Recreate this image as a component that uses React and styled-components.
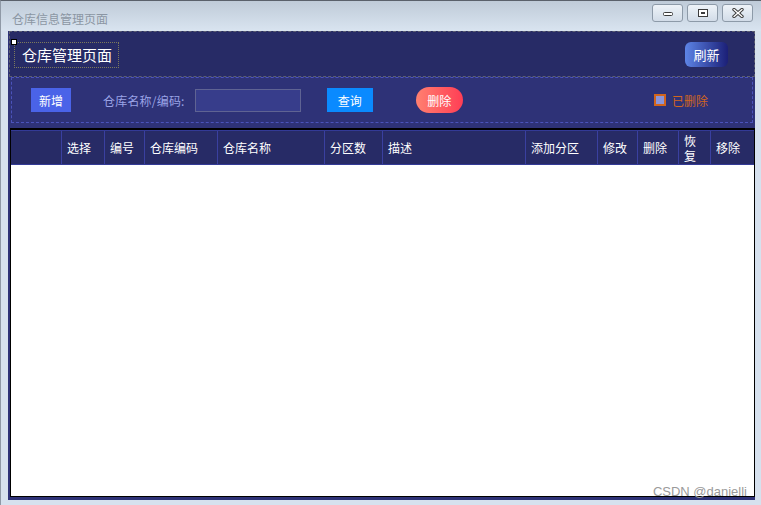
import React, { useState } from 'react'
import styled, { createGlobalStyle } from 'styled-components'

const GlobalStyle = createGlobalStyle`
  html, body {
    margin: 0;
    padding: 0;
    background: #d6e1ee;
    font-family: "Noto Sans CJK SC", "Noto Sans", sans-serif;
  }
  * {
    box-sizing: border-box;
  }
`

const columns = [
  { title: '', width: '50px' },
  { title: '选择', width: '43px' },
  { title: '编号', width: '40px' },
  { title: '仓库编码', width: '73px' },
  { title: '仓库名称', width: '107px' },
  { title: '分区数', width: '58px' },
  { title: '描述', width: '143px' },
  { title: '添加分区', width: '72px' },
  { title: '修改', width: '40px' },
  { title: '删除', width: '41px' },
  { title: '恢复', width: '32px' },
  { title: '移除', width: '1fr' }
]

const WinButton = ({ kind }) => (
  <WinBtn>
    <svg width="14" height="10" viewBox="0 0 14 10">
      {kind === 'min' && (
        <rect x="2.5" y="4.5" width="9" height="3" rx="1" fill="#fff" stroke="#3c3c3c" strokeWidth="1" />
      )}
      {kind === 'max' && (
        <g>
          <rect x="2.5" y="1.5" width="9" height="7" fill="#fff" stroke="#3c3c3c" strokeWidth="1" />
          <rect x="5" y="4" width="4" height="2" fill="#3c3c3c" />
        </g>
      )}
      {kind === 'close' && (
        <g strokeLinecap="round">
          <g stroke="#3c3c3c" strokeWidth="3.4">
            <path d="M3 1.5 L11 8.5" />
            <path d="M11 1.5 L3 8.5" />
          </g>
          <g stroke="#fff" strokeWidth="1.4">
            <path d="M3 1.5 L11 8.5" />
            <path d="M11 1.5 L3 8.5" />
          </g>
        </g>
      )}
    </svg>
  </WinBtn>
)

const App = () => {
  const [keyword, setKeyword] = useState('')
  const [deleted, setDeleted] = useState(false)

  return (
    <Window>
      <GlobalStyle />
      <TitleBar>
        <WindowTitle>仓库信息管理页面</WindowTitle>
        <WinButtons>
          <WinButton kind="min" />
          <WinButton kind="max" />
          <WinButton kind="close" />
        </WinButtons>
      </TitleBar>
      <Main>
        <Header>
          <TitleBox>
            <Handle />
            仓库管理页面
          </TitleBox>
          <RefreshButton>刷新</RefreshButton>
        </Header>
        <Toolbar>
          <Button color="#4a63e8">新增</Button>
          <Label>仓库名称/编码:</Label>
          <Input value={keyword} onChange={(e) => setKeyword(e.target.value)} />
          <Button color="#0a8aff" width="46px" gap="26px">查询</Button>
          <DeleteButton>删除</DeleteButton>
          <CheckLabel>
            <CheckBox checked={deleted} onClick={() => setDeleted(!deleted)} />
            已删除
          </CheckLabel>
        </Toolbar>
        <Table>
          <HeaderRow>
            {columns.map((col, i) => (
              <HeaderCell key={i}>{col.title}</HeaderCell>
            ))}
          </HeaderRow>
          <TableBody />
        </Table>
      </Main>
      <Watermark>CSDN @danielli</Watermark>
    </Window>
  )
}

export default App

const Window = styled.div`
  position: relative;
  width: 761px;
  height: 505px;
  display: flex;
  flex-direction: column;
  background: #d6e1ee;
  border-top: 1px solid #5a616b;
  border-left: 1px solid #8f99a6;
`

const TitleBar = styled.div`
  height: 30px;
  display: flex;
  align-items: center;
  justify-content: space-between;
  padding: 0 8px 2px 11px;
  background: linear-gradient(to bottom, #bfcbd8, #d9e4f0);
`

const WindowTitle = styled.span`
  font-size: 12px;
  color: #8b96a3;
  margin-top: 6px;
`

const WinButtons = styled.div`
  display: flex;
  gap: 4px;
  margin-top: -4px;
`

const WinBtn = styled.div`
  width: 31px;
  height: 18px;
  display: flex;
  align-items: center;
  justify-content: center;
  border: 1px solid #8d9aa8;
  border-radius: 3px;
  background: linear-gradient(to bottom, #eef3f8, #d2dce8);
`

const Main = styled.div`
  flex: 1;
  display: flex;
  flex-direction: column;
  margin: 0 6px 5px 7px;
  padding: 0 0 3px 1px;
  background: #2e3277;
`

const Header = styled.div`
  height: 46px;
  display: flex;
  align-items: center;
  justify-content: space-between;
  padding: 0 26px 0 4px;
  background: #272b66;
  border: 1px dashed #5c5e70;
`

const TitleBox = styled.div`
  position: relative;
  height: 26px;
  display: flex;
  align-items: center;
  padding: 0 6px 0 7px;
  font-size: 15px;
  color: #fff;
  border: 1px dotted #7d7a5c;
  margin-top: 1px;
`

const Handle = styled.span`
  position: absolute;
  left: -4px;
  top: -4px;
  width: 6px;
  height: 6px;
  background: #fff;
  border: 1px solid #000;
`

const RefreshButton = styled.button`
  width: 43px;
  height: 25px;
  border: none;
  border-radius: 6px;
  background: linear-gradient(to right, #5d84e6, #1b1f77);
  color: #fff;
  font-family: inherit;
  font-size: 13px;
  padding: 0;
`

const Toolbar = styled.div`
  height: 46px;
  margin: 0 2px 0 2px;
  display: flex;
  align-items: center;
  padding: 0 44px 0 19px;
  background: #2e3277;
  border: 1px dashed #4b53bb;
`

const Button = styled.button`
  width: ${(props) => props.width || '40px'};
  height: 24px;
  margin-left: ${(props) => props.gap || '0'};
  border: none;
  background: ${(props) => props.color};
  color: #fff;
  font-family: inherit;
  font-size: 12px;
  padding: 0;
`

const Label = styled.span`
  margin-left: 32px;
  font-size: 12px;
  letter-spacing: 0.2px;
  color: #9aa3e6;
`

const Input = styled.input`
  width: 106px;
  height: 23px;
  margin-left: 10px;
  background: #373d8b;
  border: 1px solid #5f6393;
  color: #fff;
  outline: none;
`

const DeleteButton = styled.button`
  width: 47px;
  height: 26px;
  margin-left: 43px;
  border: none;
  border-radius: 13px;
  background: linear-gradient(to right, #ff8070, #ff3e55);
  color: #fff;
  font-family: inherit;
  font-size: 12px;
  padding: 0;
`

const CheckLabel = styled.label`
  margin-left: auto;
  display: flex;
  align-items: center;
  gap: 6px;
  font-size: 12px;
  color: #d2661d;
`

const CheckBox = styled.span`
  width: 12px;
  height: 12px;
  border: 2px solid #d2641c;
  background: ${(props) => (props.checked ? '#d2641c' : '#8c94d8')};
`

const Table = styled.div`
  flex: 1;
  display: flex;
  flex-direction: column;
  margin: 5px 0 0 1px;
  border: 1px solid #000;
  border-width: 2px 1px 1px 1px;
  background: #fff;
`

const HeaderRow = styled.div`
  display: grid;
  grid-template-columns: ${columns.map((c) => c.width).join(' ')};
  height: 35px;
  background: #272b66;
  border-top: 1px solid #333a96;
  border-bottom: 1px solid #333a96;
`

const HeaderCell = styled.div`
  display: flex;
  align-items: center;
  padding: 0 5px;
  font-size: 12px;
  line-height: 15px;
  color: #fff;
  border-left: 1px solid #3a40a0;

  &:first-child {
    border-left: none;
  }
`

const TableBody = styled.div`
  flex: 1;
  background: #fff;
`

const Watermark = styled.span`
  position: absolute;
  right: 14px;
  bottom: 6px;
  font-family: "Liberation Sans", Arial, sans-serif;
  font-size: 13px;
  color: #9a9a9a;
`
